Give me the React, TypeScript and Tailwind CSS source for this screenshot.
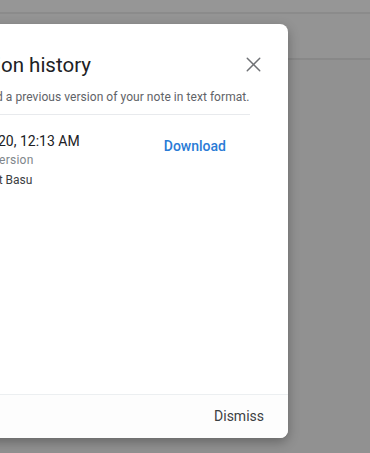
import { X } from 'lucide-react';

export default function App() {
  return (
    <div className="relative w-[370px] h-[453px] overflow-hidden bg-[#919191] font-['Roboto',sans-serif]">
      {/* page behind the scrim */}
      <div className="h-[12px] bg-[#969696]" />
      <div className="h-[2px] bg-[#8b8b8b]" />
      <div className="h-[44px] bg-[#949494]" />
      <div className="h-[2px] bg-[#888888]" />

      {/* dialog */}
      <div className="absolute top-[24px] left-[-84px] w-[372px] h-[414px] flex flex-col rounded-lg bg-white shadow-[0_4px_12px_rgba(0,0,0,0.3)]">
        <div className="flex h-[55px] items-start justify-between pl-[39px] pr-[22px] pt-[27px]">
          <h2 className="text-[20.5px] leading-7 text-[#202124]">Version history</h2>
          <button className="mt-[1px] flex h-[25px] w-[25px] items-center justify-center text-[#6f7175]">
            <X className="h-[25px] w-[25px]" strokeWidth={1.4} />
          </button>
        </div>
        <p className="mt-[10px] pl-[33px] text-[12px] leading-4 tracking-[0.05px] text-[#5f6368]">
          Download a previous version of your note in text format.
        </p>
        <div className="ml-6 mr-[38px] mt-[9px] border-t border-[#e8eaed]" />
        <div className="flex items-start justify-between pl-6 pr-[62px] pt-[16px]">
          <div className="flex flex-col">
            <span className="text-[14px] leading-5 text-[#202124]">Nov 9, 2020, 12:13 AM</span>
            <span className="mt-[1px] text-[12px] leading-4 tracking-[0.25px] text-[#80868b]">Previous Version</span>
            <span className="mt-[4px] text-[12px] leading-4 text-[#3c4043]">by Prosenjit Basu</span>
          </div>
          <button className="mt-[5px] text-[14px] font-medium leading-5 text-[#2a7bd6]">Download</button>
        </div>
        <div className="flex-1" />
        <div className="flex h-[44px] items-center justify-end rounded-b-lg border-t border-[#eceff1] bg-[#fdfdfd] pr-6">
          <button className="text-[14px] text-[#3c4043]">Dismiss</button>
        </div>
      </div>
    </div>
  );
}
